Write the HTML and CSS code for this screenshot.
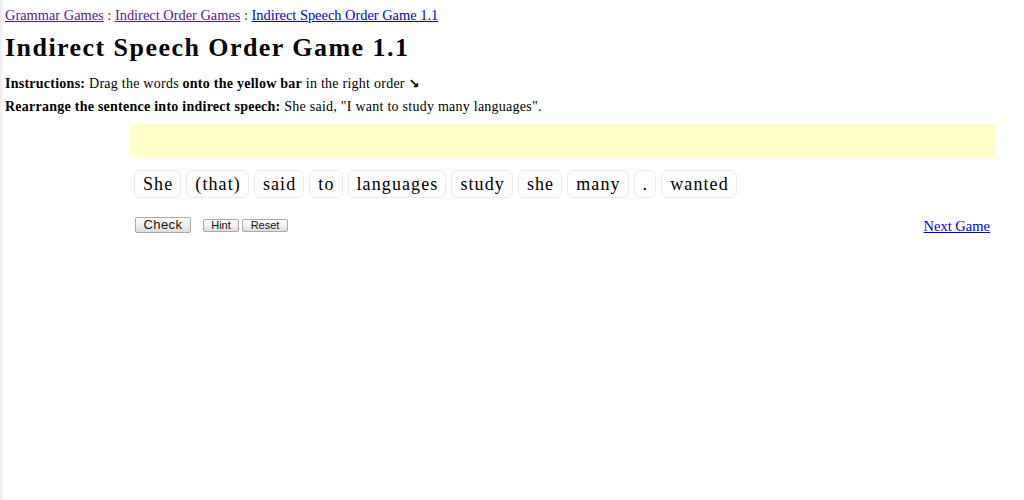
FILE: index.html
```html
<!DOCTYPE html>
<html lang="en">
<head>
<meta charset="utf-8">
<title>Indirect Speech Order Game 1.1</title>
<link rel="stylesheet" href="styles.css">
</head>
<body>
<div class="crumbs">
  <a class="visited" href="#">Grammar Games</a> : <a class="visited" href="#">Indirect Order Games</a> : <a class="current" href="#">Indirect Speech Order Game 1.1</a>
</div>
<h1 class="title">Indirect Speech Order Game 1.1</h1>
<p class="line"><b>Instructions:</b> Drag the words <b>onto the yellow bar</b> in the right order <b class="arrow">&#8600;</b></p>
<p class="line"><b>Rearrange the sentence into indirect speech:</b> She said, "I want to study many languages".</p>
<div class="game">
  <div class="dropbar"></div>
  <div class="words">
    <span class="chip">She</span>
    <span class="chip">(that)</span>
    <span class="chip">said</span>
    <span class="chip">to</span>
    <span class="chip">languages</span>
    <span class="chip">study</span>
    <span class="chip">she</span>
    <span class="chip">many</span>
    <span class="chip">.</span>
    <span class="chip">wanted</span>
  </div>
  <div class="controls">
    <div class="buttons">
      <button class="btn btn-main">Check</button>
      <button class="btn btn-small">Hint</button>
      <button class="btn btn-small">Reset</button>
    </div>
    <a class="next" href="#">Next Game</a>
  </div>
</div>
</body>
</html>
```
FILE: styles.css
```css
html {
  background: linear-gradient(to right, #e9e9e9 0, #f7f7f7 2px, #ffffff 4px);
  min-height: 100%;
}
body {
  margin: 0;
  padding: 7px 5px;
  font-family: "Liberation Serif", "Times New Roman", serif;
  color: #000;
}
a { color: #0000ee; }
a.visited { color: #551a8b; }
.crumbs {
  font-size: 14.4px;
  color: #333;
  line-height: 16px;
}
.title {
  font-size: 26px;
  letter-spacing: 1.45px;
  margin: 10px 0 0;
  line-height: 30px;
}
.line {
  font-size: 14px;
  letter-spacing: 0.25px;
  margin: 13px 0 0;
  line-height: 16px;
}
.line + .line { margin-top: 7px; }
.arrow { font-family: "DejaVu Sans", sans-serif; font-size: 13px; }
.game {
  margin: 9px 23px 0 124px;
}
.dropbar {
  height: 34px;
  background: #ffffcc;
}
.words {
  display: flex;
  flex-wrap: wrap;
  gap: 5px;
  padding: 12px 5px 0;
}
.chip {
  font-size: 18px;
  letter-spacing: 1.1px;
  line-height: 26px;
  padding: 0 7px 0 8px;
  border: 1px solid #ececec;
  border-radius: 6px;
  background: #fff;
}
.controls {
  display: flex;
  justify-content: space-between;
  align-items: flex-start;
  padding: 19px 6px 0;
}
.buttons {
  display: flex;
  align-items: center;
  gap: 3px;
}
.btn {
  font-family: "Liberation Sans", Arial, sans-serif;
  color: #111;
  border: 1px solid #a9a9a9;
  border-radius: 2px;
  background: linear-gradient(#ffffff, #f1f1f1 50%, #dcdcdc);
  padding: 0;
  margin: 0;
}
.btn-main {
  font-size: 13px;
  letter-spacing: 0.4px;
  width: 56px;
  height: 16px;
  line-height: 14px;
  margin-right: 9px;
}
.btn-small {
  font-size: 11px;
  height: 13px;
  line-height: 11px;
}
.btn-small:nth-child(2) { width: 36px; }
.btn-small:nth-child(3) { width: 46px; }
.next {
  font-size: 14.5px;
  margin-top: 1px;
}
```
